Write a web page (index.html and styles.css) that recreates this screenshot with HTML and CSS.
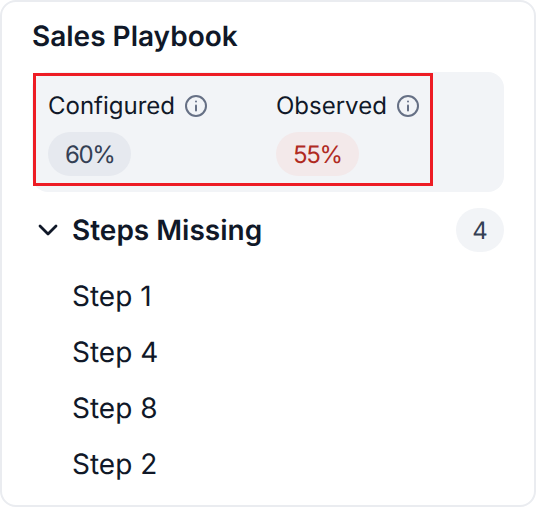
FILE: index.html
```html
<!DOCTYPE html>
<html lang="en">
<head>
<meta charset="utf-8">
<title>Sales Playbook</title>
<link rel="stylesheet" href="styles.css">
</head>
<body>
<section class="card">
  <h2 class="title">Sales Playbook</h2>
  <div class="panel">
    <div class="metric">
      <div class="label">Configured
        <svg class="info" viewBox="0 0 24 24" fill="none" stroke="currentColor" stroke-width="2" stroke-linecap="round"><circle cx="12" cy="12" r="10"/><path d="M12 11.5v5"/><path d="M12 7.5h.01"/></svg>
      </div>
      <span class="pill pill-neutral">60%</span>
    </div>
    <div class="metric">
      <div class="label">Observed
        <svg class="info" viewBox="0 0 24 24" fill="none" stroke="currentColor" stroke-width="2" stroke-linecap="round"><circle cx="12" cy="12" r="10"/><path d="M12 11.5v5"/><path d="M12 7.5h.01"/></svg>
      </div>
      <span class="pill pill-danger">55%</span>
    </div>
    <div class="highlight"></div>
  </div>
  <div class="section-head">
    <svg class="chevron" viewBox="0 0 24 24" fill="none" stroke="currentColor" stroke-width="2.8" stroke-linecap="round" stroke-linejoin="round"><path d="M4 8l8 8 8-8"/></svg>
    <h3 class="section-title">Steps Missing</h3>
    <span class="count">4</span>
  </div>
  <ul class="steps">
    <li>Step 1</li>
    <li>Step 4</li>
    <li>Step 8</li>
    <li>Step 2</li>
  </ul>
</section>
</body>
</html>
```

FILE: styles.css
```css
* { box-sizing: border-box; }
html, body { margin: 0; padding: 0; background: #fff; }
body { font-family: Inter, "Liberation Sans", sans-serif; color: #101828; text-rendering: geometricPrecision; }
.card {
  width: 536px;
  height: 507px;
  border: 2px solid #eaecf0;
  border-radius: 16px;
  padding: 18px 30px 0;
}
.title { margin: 0; font-size: 28px; line-height: 32px; font-weight: 600; }
.panel {
  position: relative;
  display: flex;
  margin-top: 20px;
  height: 120px;
  padding: 18px 16px 16px;
  background: #f2f4f7;
  border-radius: 16px;
}
.metric { flex: none; width: 228px; display: flex; flex-direction: column; align-items: flex-start; gap: 10px; }
.label { display: flex; align-items: center; gap: 9px; font-size: 24px; line-height: 32px; }
.info { flex: none; width: 24px; height: 24px; color: #667085; }
.pill {
  display: inline-flex;
  flex: none;
  align-items: center;
  height: 44px;
  padding: 0 17px;
  border-radius: 22px;
  font-size: 24px;
  letter-spacing: -1.4px;
}
.pill-neutral { background: #e6e9ef; color: #344054; }
.pill-danger { background: #f3e9ea; color: #b02a1f; }
.highlight {
  position: absolute;
  left: 1px;
  top: 1px;
  width: 400px;
  height: 113px;
  border: 3px solid #ed1c24;
}
.section-head { display: flex; align-items: center; margin-top: 16px; height: 44px; }
.chevron { flex: none; width: 24px; height: 24px; margin: 0 12px 0 4px; }
.section-title { margin: 0; flex: 1; font-size: 28px; line-height: 32px; font-weight: 600; }
.count {
  display: flex;
  align-items: center;
  justify-content: center;
  width: 48px;
  height: 44px;
  border-radius: 22px;
  background: #f2f4f7;
  color: #344054;
  font-size: 24px;
}
.steps { list-style: none; margin: 16px 0 0; padding: 0 0 0 40px; }
.steps li { height: 56px; display: flex; align-items: center; font-size: 28px; line-height: 32px; }
```
